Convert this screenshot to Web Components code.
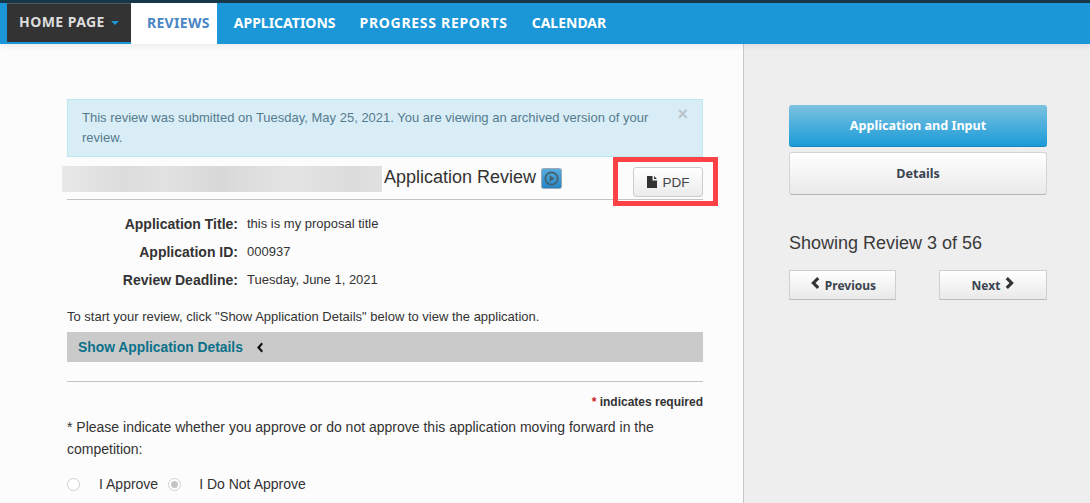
<!DOCTYPE html>
<html>
<head>
<meta charset="utf-8">
<title>Application Review</title>
<style>
  html, body { margin: 0; padding: 0; height: 503px; overflow: hidden; }
  body { font-family: "Liberation Sans", Arial, sans-serif; color: #333; }
</style>
</head>
<body>
<review-page></review-page>

<template id="nav-tpl">
  <style>
    :host { display: flex; height: 41px; border-top: 3px solid #17384a; background: #1b96d6; padding-left: 7px; position: relative;
      font: 700 14px "Noto Sans", sans-serif; color: #fff; box-shadow: 0 2px 6px rgba(0,0,0,.08); }
    .home { display: flex; align-items: center; width: 124px; height: 39px; box-sizing: border-box; padding: 0 0 3px 12px; background: #333;
      color: #ddd; border-top: 1px solid #4a5a60; letter-spacing: .45px; }
    .caret { width: 0; height: 0; margin: 2px 0 0 6px; border: 4px solid transparent; border-top-color: #1b96d6; border-bottom: 0; }
    a { display: flex; align-items: center; padding: 0 12px 2px; }
    a.on { background: #fff; color: #4a86c5; padding: 0 7px 2px 16px; margin-right: 5px; letter-spacing: .3px; }
    a.wide { letter-spacing: .7px; }
  </style>
  <div class="home">HOME PAGE<span class="caret"></span></div>
  <a class="on">REVIEWS</a>
  <a>APPLICATIONS</a>
  <a class="wide">PROGRESS REPORTS</a>
  <a>CALENDAR</a>
</template>

<template id="alert-tpl">
  <style>
    :host { display: block; box-sizing: border-box; height: 58px; padding: 8px 50px 0 14px; position: relative;
      background: #d9edf7; border: 1px solid #bce8f1; font-size: 13px; line-height: 20px; color: #557b8e; }
    .close { position: absolute; top: 4px; right: 14px; font: 700 18px/20px "Liberation Sans", sans-serif; color: #b9c6cc; }
  </style>
  <slot></slot><span class="close">×</span>
</template>

<template id="header-tpl">
  <style>
    :host { display: flex; align-items: flex-start; height: 42px; border-bottom: 1px solid #c4c4c4; position: relative; }
    .blur { width: 320px; height: 26px; margin: 9px 2px 0 -5px;
      background: linear-gradient(90deg, #e8e8e8, #dcdcdc 20%, #e2e2e2 32%, #d8d8d8 50%, #e4e4e4 72%, #dcdcdc 90%, #e0e0e0); }
    h2 { margin: 8px 5px 0 0; font: 400 18px/24px "Liberation Sans", sans-serif; color: #333; }
    .play { width: 21px; height: 21px; margin-top: 11px; }
    .pdf { margin: 10px 0 0 auto; width: 70px; height: 30px; box-sizing: border-box; display: flex; align-items: center; justify-content: center; gap: 6px;
      border: 1px solid #ccc; border-radius: 3px; background: linear-gradient(#fff, #ebebeb); font-size: 13.500px; color: #444; }
    .mark { position: absolute; left: 546px; top: 0; width: 105px; height: 49px; box-sizing: border-box; border: 5px solid #fd4245; }
  </style>
  <div class="blur"></div>
  <h2>Application Review</h2>
  <svg class="play" viewBox="0 0 21 21">
    <defs><linearGradient id="pg" x1="0" y1="0" x2="0" y2="1"><stop offset="0" stop-color="#5aaede"/><stop offset="1" stop-color="#2484c4"/></linearGradient></defs>
    <rect x=".5" y=".5" width="20" height="20" rx="2" fill="url(#pg)" stroke="#9aa9b4"/>
    <circle cx="10.500" cy="10.500" r="6.200" fill="none" stroke="#44616f" stroke-width="1.700"/>
    <path d="M8.600 7.300l5 3.200-5 3.200z" fill="#44616f"/>
  </svg>
  <div class="pdf">
    <svg width="10" height="12" viewBox="0 0 10 12"><path d="M0 0h5.500v4.500H10V12H0zM7 0l3 3H7z" fill="#333"/></svg>PDF
  </div>
  <div class="mark"></div>
</template>

<template id="meta-tpl">
  <style>
    :host { display: flex; align-items: baseline; height: 28px; font-size: 13px; color: #333; }
    b { width: 171px; text-align: right; margin-right: 9px; font-size: 14px; position: relative; top: 1px; }
  </style>
  <b><slot name="label"></slot></b><span><slot></slot></span>
</template>

<template id="toggle-tpl">
  <style>
    :host { display: flex; align-items: center; height: 30px; padding-left: 11px; gap: 14px; background: #cacaca;
      font-size: 13.850px; font-weight: 700; color: #0b7189; }
  </style>
  <slot></slot>
  <svg width="6" height="11" viewBox="0 0 6 11"><path d="M4.500 .5L6 2 3 5.500 6 9l-1.500 1.500L0 5.500z" fill="#111"/></svg>
</template>

<template id="radio-tpl">
  <style>
    :host { display: inline-flex; align-items: center; font-size: 14px; color: #333; }
    i { width: 11px; height: 11px; border: 1px solid #cfcfcf; border-radius: 50%; background: #fff; margin-right: 19px; position: relative; }
    :host([checked]) i { margin-right: 18px; }
    :host([checked]) i::after { content: ""; position: absolute; left: 2px; top: 2px; width: 7px; height: 7px; border-radius: 50%; background: #c4c4c4; }
  </style>
  <i></i><slot></slot>
</template>

<template id="side-btn-tpl">
  <style>
    :host { display: flex; align-items: center; justify-content: center; box-sizing: border-box; height: 43px; padding-top: 1px; padding-bottom: 1px; border-radius: 3px;
      border: 1px solid #d5d5d5; border-bottom-color: #b5b5b5; background: linear-gradient(#fff, #e9e9e9); font: 700 12.600px "Noto Sans", sans-serif; color: #3a4450; }
    :host([primary]) { height: 42px; color: #fff; border: 0; border-bottom: 1px solid #1b84bd; background: linear-gradient(#7cc2e0, #1b9bd8); }
  </style>
  <slot></slot>
</template>

<template id="pager-tpl">
  <style>
    :host { display: flex; align-items: center; justify-content: center; gap: 5px; box-sizing: border-box; height: 30px; width: 107px;
      border: 1px solid #cfcfcf; border-bottom-color: #bbb; background: linear-gradient(#fff, #e9e9e9); font: 700 12px "Noto Sans", sans-serif; color: #3a4450; }
    :host([back]) { padding-left: 2px; }
    ::slotted(svg) { position: relative; top: -2px; }
  </style>
  <slot name="before"></slot><slot></slot><slot name="after"></slot>
</template>

<template id="page-tpl">
  <style>
    :host { display: block; height: 503px; }
    .cols { display: flex; height: 459px; }
    main { box-sizing: border-box; width: 744px; padding: 55px 40px 0 67px; background: #fcfcfc; border-right: 1px solid #c8c8c8; }
    aside { flex: 1; padding: 61px 43px 0 45px; background: #eee; }
    .meta { padding-top: 15px; }
    p { margin: 0; }
    .start { font-size: 13px; line-height: 16px; margin-top: 10px; color: #333; }
    review-toggle { margin-top: 7px; }
    hr { margin: 19px 0 0; border: 0; border-top: 1px solid #c4c4c4; }
    .req { margin-top: 13px; text-align: right; font-size: 12px; line-height: 14px; font-weight: 700; color: #333; }
    .req span { color: #c22; }
    .q { margin-top: 8px; font-size: 14px; line-height: 21.500px; color: #333; }
    .radios { display: flex; gap: 10px; margin-top: 16px; }
    review-side-btn + review-side-btn { margin-top: 5px; }
    h3 { margin: 36px 0 15px; font: 400 18px/24px "Liberation Sans", sans-serif; color: #3a3a3a; }
    .pager { display: flex; justify-content: space-between; }
    .pager svg { display: block; }
  </style>
  <review-nav></review-nav>
  <div class="cols">
    <main>
      <review-alert>This review was submitted on Tuesday, May 25, 2021. You are viewing an archived version of your review.</review-alert>
      <review-header></review-header>
      <div class="meta">
        <review-meta><span slot="label">Application Title:</span>this is my proposal title</review-meta>
        <review-meta><span slot="label">Application ID:</span>000937</review-meta>
        <review-meta><span slot="label">Review Deadline:</span>Tuesday, June 1, 2021</review-meta>
      </div>
      <p class="start">To start your review, click "Show Application Details" below to view the application.</p>
      <review-toggle>Show Application Details</review-toggle>
      <hr>
      <p class="req"><span>*</span> indicates required</p>
      <p class="q">* Please indicate whether you approve or do not approve this application moving forward in the competition:</p>
      <div class="radios">
        <review-radio>I Approve</review-radio>
        <review-radio checked>I Do Not Approve</review-radio>
      </div>
    </main>
    <aside>
      <review-side-btn primary>Application and Input</review-side-btn>
      <review-side-btn>Details</review-side-btn>
      <h3>Showing Review 3 of 56</h3>
      <div class="pager">
        <review-pager back>
          <svg slot="before" width="9" height="12" viewBox="0 0 8 11"><path d="M5.500 0L7.500 2 4 5.500 7.500 9l-2 2L0 5.500z" fill="#333"/></svg>
          Previous
        </review-pager>
        <review-pager style="width:108px">
          Next
          <svg slot="after" width="9" height="12" viewBox="0 0 8 11"><path d="M2.500 0L.5 2 4 5.500.5 9l2 2L8 5.500z" fill="#333"/></svg>
        </review-pager>
      </div>
    </aside>
  </div>
</template>

<script>
  // every element just stamps its own template into an open shadow root
  const stamp = (tag, tplId) => {
    customElements.define(tag, class extends HTMLElement {
      constructor() {
        super();
        this.attachShadow({ mode: 'open' });
        this.shadowRoot.append(document.getElementById(tplId).content.cloneNode(true));
      }
    });
  };

  stamp('review-nav', 'nav-tpl');
  stamp('review-alert', 'alert-tpl');
  stamp('review-header', 'header-tpl');
  stamp('review-meta', 'meta-tpl');
  stamp('review-toggle', 'toggle-tpl');
  stamp('review-radio', 'radio-tpl');
  stamp('review-side-btn', 'side-btn-tpl');
  stamp('review-pager', 'pager-tpl');
  stamp('review-page', 'page-tpl');
</script>
</body>
</html>
